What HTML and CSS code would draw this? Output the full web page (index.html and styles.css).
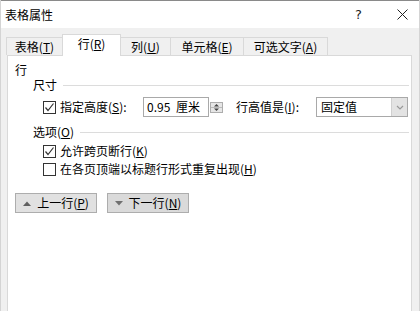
FILE: index.html
```html
<!DOCTYPE html>
<html lang="zh-CN">
<head>
<meta charset="utf-8">
<title>表格属性</title>
<link rel="stylesheet" href="styles.css">
</head>
<body>
<div class="window">
  <div class="titlebar">
    <span class="title">表格属性</span>
    <span class="help">?</span>
    <span class="close"><svg width="11" height="11" viewBox="0 0 11 11"><path d="M0.5 0.5L10.5 10.5M10.5 0.5L0.5 10.5" stroke="#222" stroke-width="1"/></svg></span>
  </div>
  <div class="tabs">
    <div class="tab t1">表格(<u>T</u>)</div>
    <div class="tab t2 active">行(<u>R</u>)</div>
    <div class="tab t3">列(<u>U</u>)</div>
    <div class="tab t4">单元格(<u>E</u>)</div>
    <div class="tab t5">可选文字(<u>A</u>)</div>
  </div>
  <div class="panel">
    <div class="heading">行</div>
    <div class="group g1"><span>尺寸</span><i class="rule"></i></div>
    <div class="row r1">
      <label class="cbitem fixed">
        <span class="cb"><svg width="11" height="11" viewBox="0 0 11 11"><path d="M1.5 5.5L4 8.5L9.5 1.5" fill="none" stroke="#333" stroke-width="1.2"/></svg></span>
        <span>指定高度(<u>S</u>):</span>
      </label>
      <div class="edit">0.95 厘米</div>
      <div class="spin">
        <svg width="11" height="9" viewBox="0 0 11 9"><path d="M3 3.5L5.5 1L8 3.5Z" fill="#444"/><path d="M0 4.5H11" stroke="#bbb"/><path d="M3 5.5L5.5 8L8 5.5Z" fill="#444"/></svg>
      </div>
      <span class="lbl">行高值是(<u>I</u>):</span>
      <div class="combo"><span class="ctext">固定值</span><span class="carrow"><svg width="8" height="5" viewBox="0 0 8 5"><path d="M1 1L4 4L7 1" fill="none" stroke="#999" stroke-width="1.2"/></svg></span></div>
    </div>
    <div class="group g2"><span>选项(<u>O</u>)</span><i class="rule"></i></div>
    <div class="row r2">
      <label class="cbitem">
        <span class="cb"><svg width="11" height="11" viewBox="0 0 11 11"><path d="M1.5 5.5L4 8.5L9.5 1.5" fill="none" stroke="#333" stroke-width="1.2"/></svg></span>
        <span>允许跨页断行(<u>K</u>)</span>
      </label>
    </div>
    <div class="row r3">
      <label class="cbitem">
        <span class="cb"></span>
        <span>在各页顶端以标题行形式重复出现(<u>H</u>)</span>
      </label>
    </div>
    <div class="buttons">
      <div class="btn"><svg width="8" height="5" viewBox="0 0 8 5"><path d="M0 5L4 0.5L8 5Z" fill="#606060"/></svg><span>上一行(<u>P</u>)</span></div>
      <div class="btn dark"><svg width="8" height="5" viewBox="0 0 8 5"><path d="M0 0L4 4.5L8 0Z" fill="#707070"/></svg><span>下一行(<u>N</u>)</span></div>
    </div>
  </div>
  <svg class="cursor" width="6" height="8" viewBox="0 0 6 8"><path d="M0.5 0.5V7.5L2 6L5 7.5Z" fill="#000" stroke="#fff" stroke-width="0.6"/></svg>
</div>
</body>
</html>
```
FILE: styles.css
```css
* { box-sizing: border-box; }
html, body { margin: 0; padding: 0; }
body {
  width: 420px;
  height: 311px;
  overflow: hidden;
  background: #f0f0f0;
  font-family: "Noto Sans CJK SC", "DejaVu Sans", sans-serif;
  font-size: 12px;
  color: #000;
}
u { text-decoration: underline; text-underline-offset: 1px; }
.window {
  position: relative;
  width: 420px;
  height: 311px;
  border-left: 1px solid #d4d4d4;
  border-right: 1px solid #d4d4d4;
}
.titlebar {
  height: 28px;
  background: #fff;
  border-top: 1px solid #8a8a8a;
  display: flex;
  align-items: center;
  padding-left: 4px;
}
.title { font-size: 12px; line-height: 14px; flex: 1; }
.help { width: 42px; font-size: 13px; line-height: 14px; color: #222; font-family: "DejaVu Sans", sans-serif; }
.close { width: 20px; margin-right: 2px; display: flex; align-items: center; }

.tabs {
  height: 27px;
  display: flex;
  align-items: flex-end;
  padding-left: 6px;
  position: relative;
  z-index: 2;
}
.tab {
  height: 18px;
  border: 1px solid #d9d9d9;
  border-bottom: none;
  background: #f0f0f0;
  display: flex;
  align-items: center;
  justify-content: center;
  line-height: 14px;
  margin-left: -1px;
}
.tab.active {
  height: 22px;
  background: #fff;
  margin-bottom: -1px;
  padding-bottom: 3px;
  position: relative;
}
.t1 { width: 57px; }
.t2 { width: 59px; }
.t3 { width: 51px; }
.t4 { width: 74px; }
.t5 { width: 85px; }

.panel {
  margin-left: 6px;
  width: 405px;
  height: 260px;
  background: #fff;
  border: 1px solid #d9d9d9;
  padding: 0 2px 0 7px;
  position: relative;
  z-index: 1;
}
.heading { margin-top: 7px; height: 14px; line-height: 14px; }
.group {
  display: flex;
  align-items: center;
  height: 16px;
  line-height: 14px;
  padding-left: 18px;
}
.group .rule {
  flex: 1;
  height: 1px;
  background: #dcdcdc;
  margin-left: 6px;
}
.g2 { margin-top: 7px; }

.row { display: flex; align-items: center; padding-left: 28px; }
.r1 { height: 20px; margin-top: 4px; }
.r2 { height: 16px; margin-top: 3px; }
.r3 { height: 16px; margin-top: 2px; }

.cbitem { display: flex; align-items: center; gap: 4px; line-height: 14px; }
.cbitem.fixed { width: 100px; flex: none; }
.cb {
  width: 13px;
  height: 13px;
  border: 1px solid #333;
  background: #fff;
  display: flex;
  align-items: center;
  justify-content: center;
  flex: none;
}
.edit {
  width: 66px;
  height: 20px;
  border: 1px solid #a9a9a9;
  padding-left: 3px;
  line-height: 18px;
  word-spacing: 3px;
  flex: none;
}
.spin {
  width: 13px;
  height: 11px;
  margin-left: 1px;
  border: 1px solid #adadad;
  background: #e6e6e6;
  display: flex;
  align-items: center;
  justify-content: center;
  flex: none;
}
.lbl { margin-left: 13px; width: 80px; flex: none; line-height: 14px; }
.combo {
  width: 92px;
  height: 20px;
  border: 1px solid #a9a9a9;
  display: flex;
  flex: none;
}
.ctext { flex: 1; padding-left: 4px; line-height: 18px; }
.carrow {
  width: 16px;
  background: #e3e3e3;
  border-left: 1px solid #d0d0d0;
  display: flex;
  align-items: center;
  justify-content: center;
}

.buttons { display: flex; gap: 10px; margin-top: 16px; }
.btn {
  width: 82px;
  height: 20px;
  background: #e1e1e1;
  border: 1px solid #adadad;
  display: flex;
  align-items: center;
  justify-content: center;
  gap: 6px;
  line-height: 14px;
}
.btn.dark { background: #dadada; }
.cursor { position: absolute; left: 315px; top: 303px; }
```
